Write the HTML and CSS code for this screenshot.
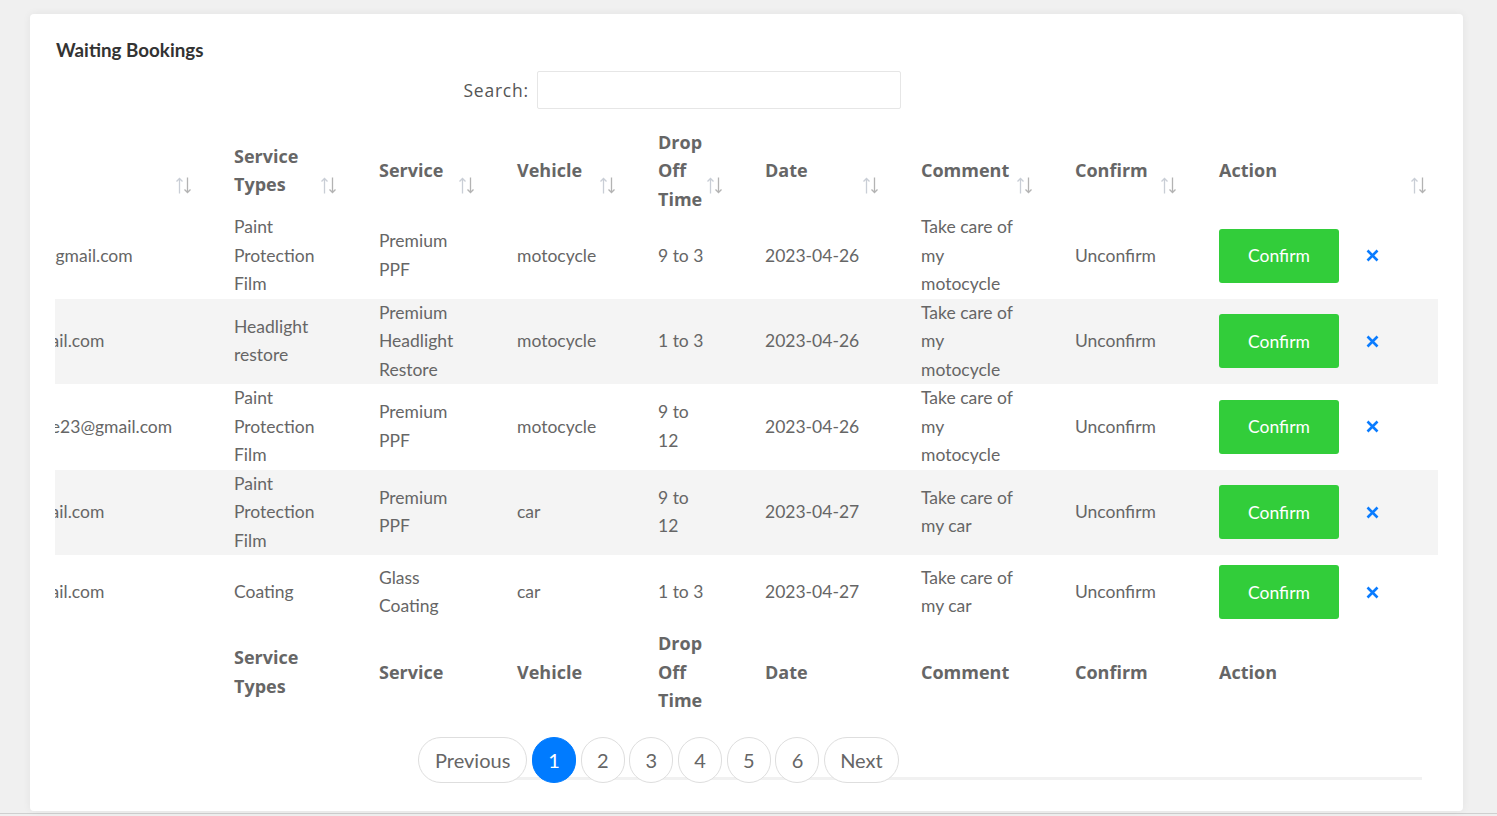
FILE: index.html
```html
<!DOCTYPE html>
<html lang="en">
<head>
<meta charset="utf-8">
<title>Waiting Bookings</title>
<link rel="stylesheet" href="styles.css">
</head>
<body>
<div class="page">
  <section class="card">
    <h2 class="card-title">Waiting Bookings</h2>
    <div class="filter-row">
      <label class="search">Search:<input type="search" class="search-input"></label>
    </div>
    <div class="table-scroll">
      <table class="bookings">
        <thead>
          <tr>
            <th class="c0">Email<svg class="sort" viewBox="0 0 17 17"><path class="up" d="M4.5 16.5V1.5M1.5 4.5L4.5 1.5L7.5 4.5"/><path class="down" d="M12.5 0.5V15.5M9.5 12.5L12.5 15.5L15.5 12.5"/></svg></th>
            <th class="c1">Service Types<svg class="sort" viewBox="0 0 17 17"><path class="up" d="M4.5 16.5V1.5M1.5 4.5L4.5 1.5L7.5 4.5"/><path class="down" d="M12.5 0.5V15.5M9.5 12.5L12.5 15.5L15.5 12.5"/></svg></th>
            <th class="c2">Service<svg class="sort" viewBox="0 0 17 17"><path class="up" d="M4.5 16.5V1.5M1.5 4.5L4.5 1.5L7.5 4.5"/><path class="down" d="M12.5 0.5V15.5M9.5 12.5L12.5 15.5L15.5 12.5"/></svg></th>
            <th class="c3">Vehicle<svg class="sort" viewBox="0 0 17 17"><path class="up" d="M4.5 16.5V1.5M1.5 4.5L4.5 1.5L7.5 4.5"/><path class="down" d="M12.5 0.5V15.5M9.5 12.5L12.5 15.5L15.5 12.5"/></svg></th>
            <th class="c4">Drop Off Time<svg class="sort" viewBox="0 0 17 17"><path class="up" d="M4.5 16.5V1.5M1.5 4.5L4.5 1.5L7.5 4.5"/><path class="down" d="M12.5 0.5V15.5M9.5 12.5L12.5 15.5L15.5 12.5"/></svg></th>
            <th class="c5">Date<svg class="sort" viewBox="0 0 17 17"><path class="up" d="M4.5 16.5V1.5M1.5 4.5L4.5 1.5L7.5 4.5"/><path class="down" d="M12.5 0.5V15.5M9.5 12.5L12.5 15.5L15.5 12.5"/></svg></th>
            <th class="c6">Comment<svg class="sort" viewBox="0 0 17 17"><path class="up" d="M4.5 16.5V1.5M1.5 4.5L4.5 1.5L7.5 4.5"/><path class="down" d="M12.5 0.5V15.5M9.5 12.5L12.5 15.5L15.5 12.5"/></svg></th>
            <th class="c7">Confirm<svg class="sort" viewBox="0 0 17 17"><path class="up" d="M4.5 16.5V1.5M1.5 4.5L4.5 1.5L7.5 4.5"/><path class="down" d="M12.5 0.5V15.5M9.5 12.5L12.5 15.5L15.5 12.5"/></svg></th>
            <th class="c8">Action<svg class="sort sort-last" viewBox="0 0 17 17"><path class="up" d="M4.5 16.5V1.5M1.5 4.5L4.5 1.5L7.5 4.5"/><path class="down" d="M12.5 0.5V15.5M9.5 12.5L12.5 15.5L15.5 12.5"/></svg></th>
          </tr>
        </thead>
        <tbody>
          <tr>
            <td>johnsmith@gmail.com</td>
            <td>Paint Protection Film</td>
            <td>Premium PPF</td>
            <td>motocycle</td>
            <td>9 to 3</td>
            <td>2023-04-26</td>
            <td>Take care of my motocycle</td>
            <td>Unconfirm</td>
            <td><div class="actions"><button class="btn-confirm">Confirm</button><button class="btn-remove" aria-label="Remove"><svg viewBox="0 0 13 13"><path d="M1.5 1.5L11.5 11.5M11.5 1.5L1.5 11.5"/></svg></button></div></td>
          </tr>
          <tr>
            <td>rahulk@gmail.com</td>
            <td>Headlight restore</td>
            <td>Premium Headlight Restore</td>
            <td>motocycle</td>
            <td>1 to 3</td>
            <td>2023-04-26</td>
            <td>Take care of my motocycle</td>
            <td>Unconfirm</td>
            <td><div class="actions"><button class="btn-confirm">Confirm</button><button class="btn-remove" aria-label="Remove"><svg viewBox="0 0 13 13"><path d="M1.5 1.5L11.5 11.5M11.5 1.5L1.5 11.5"/></svg></button></div></td>
          </tr>
          <tr>
            <td>tejasbhosale23@gmail.com</td>
            <td>Paint Protection Film</td>
            <td>Premium PPF</td>
            <td>motocycle</td>
            <td>9 to 12</td>
            <td>2023-04-26</td>
            <td>Take care of my motocycle</td>
            <td>Unconfirm</td>
            <td><div class="actions"><button class="btn-confirm">Confirm</button><button class="btn-remove" aria-label="Remove"><svg viewBox="0 0 13 13"><path d="M1.5 1.5L11.5 11.5M11.5 1.5L1.5 11.5"/></svg></button></div></td>
          </tr>
          <tr>
            <td>rahulk@gmail.com</td>
            <td>Paint Protection Film</td>
            <td>Premium PPF</td>
            <td>car</td>
            <td>9 to 12</td>
            <td>2023-04-27</td>
            <td>Take care of my car</td>
            <td>Unconfirm</td>
            <td><div class="actions"><button class="btn-confirm">Confirm</button><button class="btn-remove" aria-label="Remove"><svg viewBox="0 0 13 13"><path d="M1.5 1.5L11.5 11.5M11.5 1.5L1.5 11.5"/></svg></button></div></td>
          </tr>
          <tr>
            <td>rahulk@gmail.com</td>
            <td>Coating</td>
            <td>Glass Coating</td>
            <td>car</td>
            <td>1 to 3</td>
            <td>2023-04-27</td>
            <td>Take care of my car</td>
            <td>Unconfirm</td>
            <td><div class="actions"><button class="btn-confirm">Confirm</button><button class="btn-remove" aria-label="Remove"><svg viewBox="0 0 13 13"><path d="M1.5 1.5L11.5 11.5M11.5 1.5L1.5 11.5"/></svg></button></div></td>
          </tr>
        </tbody>
        <tfoot>
          <tr>
            <th>Email</th>
            <th>Service Types</th>
            <th>Service</th>
            <th>Vehicle</th>
            <th>Drop Off Time</th>
            <th>Date</th>
            <th>Comment</th>
            <th>Confirm</th>
            <th>Action</th>
          </tr>
        </tfoot>
      </table>
    </div>
    <nav class="pager">
      <button class="page-btn">Previous</button>
      <button class="page-btn num active">1</button>
      <button class="page-btn num">2</button>
      <button class="page-btn num">3</button>
      <button class="page-btn num">4</button>
      <button class="page-btn num">5</button>
      <button class="page-btn num">6</button>
      <button class="page-btn next">Next</button>
    </nav>
  </section>
</div>
</body>
</html>
```

FILE: styles.css
```css
* { box-sizing: border-box; }

html, body {
  margin: 0;
  padding: 0;
}

body {
  background: #f0f0f0;
  height: 816px;
  overflow: hidden;
  font-family: "Lato", "Liberation Sans", sans-serif;
}

.page {
  height: 814px;
  padding: 14px 34px 0 30px;
  border-bottom: 1px solid #cfcfcf;
}

.card {
  background: #fff;
  height: 797px;
  border-radius: 4px;
  box-shadow: 0 0 8px rgba(0, 0, 0, 0.06);
  padding: 25px 25px 0 25px;
}

.card-title {
  margin: 0 0 0 1px;
  font-family: "Lato", sans-serif;
  font-weight: 700;
  font-size: 18.8px;
  line-height: 22px;
  color: #333;
}

.filter-row {
  width: 846px;
  display: flex;
  justify-content: flex-end;
  margin-top: 10px;
}

.search {
  display: flex;
  align-items: center;
  gap: 8px;
  font-family: "Open Sans", sans-serif;
  font-size: 17.5px;
  color: #555;
  letter-spacing: 0.8px;
}

.search-input {
  width: 364px;
  height: 38px;
  border: 1px solid #e6e6e6;
  border-radius: 2px;
  background: #fff;
  outline: none;
  margin: 0;
}

.table-scroll {
  margin-top: 18.5px;
  overflow: hidden;
  width: 1383px;
}

.bookings {
  table-layout: fixed;
  border-collapse: collapse;
  border-spacing: 0;
  width: 1473px;
  margin-left: -90px;
}

.bookings th,
.bookings td {
  padding: 0 59px 0 0;
  text-align: left;
  vertical-align: middle;
  line-height: 28.5px;
}

.bookings th {
  position: relative;
  font-family: "Open Sans", sans-serif;
  font-weight: 700;
  font-size: 18px;
  color: #666;
}

.bookings td {
  font-family: "Lato", sans-serif;
  font-size: 17.5px;
  color: #666;
  white-space: normal;
}

.bookings td:first-child { white-space: nowrap; }

.bookings tbody tr:nth-child(even) td { background: #f4f4f4; }

.bookings .c0 { width: 269px; }
.bookings .c1 { width: 145px; }
.bookings .c2 { width: 138px; }
.bookings .c3 { width: 141px; }
.bookings .c4 { width: 107px; }
.bookings .c5 { width: 156px; }
.bookings .c6 { width: 154px; }
.bookings .c7 { width: 144px; }
.bookings .c8 { width: 219px; padding-right: 28px; }

.bookings tfoot th:last-child { padding-right: 28px; }

.sort {
  position: absolute;
  right: 42px;
  bottom: 19px;
  width: 17px;
  height: 17px;
  fill: none;
  stroke-width: 1.3;
}

.sort .up { stroke: #c9ced6; }
.sort .down { stroke: #b3b3b3; }

.sort.sort-last { right: 11px; }

.actions {
  display: flex;
  align-items: center;
  gap: 27px;
}

.btn-confirm {
  width: 121px;
  height: 54px;
  margin: 10px 0;
  border: 0;
  border-radius: 3px;
  background: #32cd3a;
  color: #fff;
  font-family: "Lato", sans-serif;
  font-size: 17.5px;
  padding: 0;
}

.btn-remove {
  width: 13px;
  height: 13px;
  padding: 0;
  border: 0;
  background: none;
  display: flex;
}

.btn-remove svg {
  width: 13px;
  height: 13px;
  fill: none;
  stroke: #0a7cff;
  stroke-width: 2.6;
}

.pager {
  position: relative;
  display: flex;
  gap: 4.7px;
  margin-top: 22.5px;
  padding-left: 363px;
  width: 1383px;
}

.pager::before {
  content: "";
  position: absolute;
  left: 447px;
  right: 16px;
  bottom: 3px;
  height: 3px;
  background: #f1f1f1;
}

.page-btn {
  position: relative;
  height: 46px;
  min-width: 44px;
  padding: 0 16px;
  border: 1px solid #dedede;
  border-radius: 23px;
  background: #fff;
  color: #666;
  font-family: "Lato", sans-serif;
  font-size: 20px;
  line-height: 44px;
}

.page-btn.num { width: 44px; padding: 0; }

.page-btn.next { padding: 0 15px; }

.page-btn.active {
  background: #007bff;
  border-color: #007bff;
  color: #fff;
}
```
